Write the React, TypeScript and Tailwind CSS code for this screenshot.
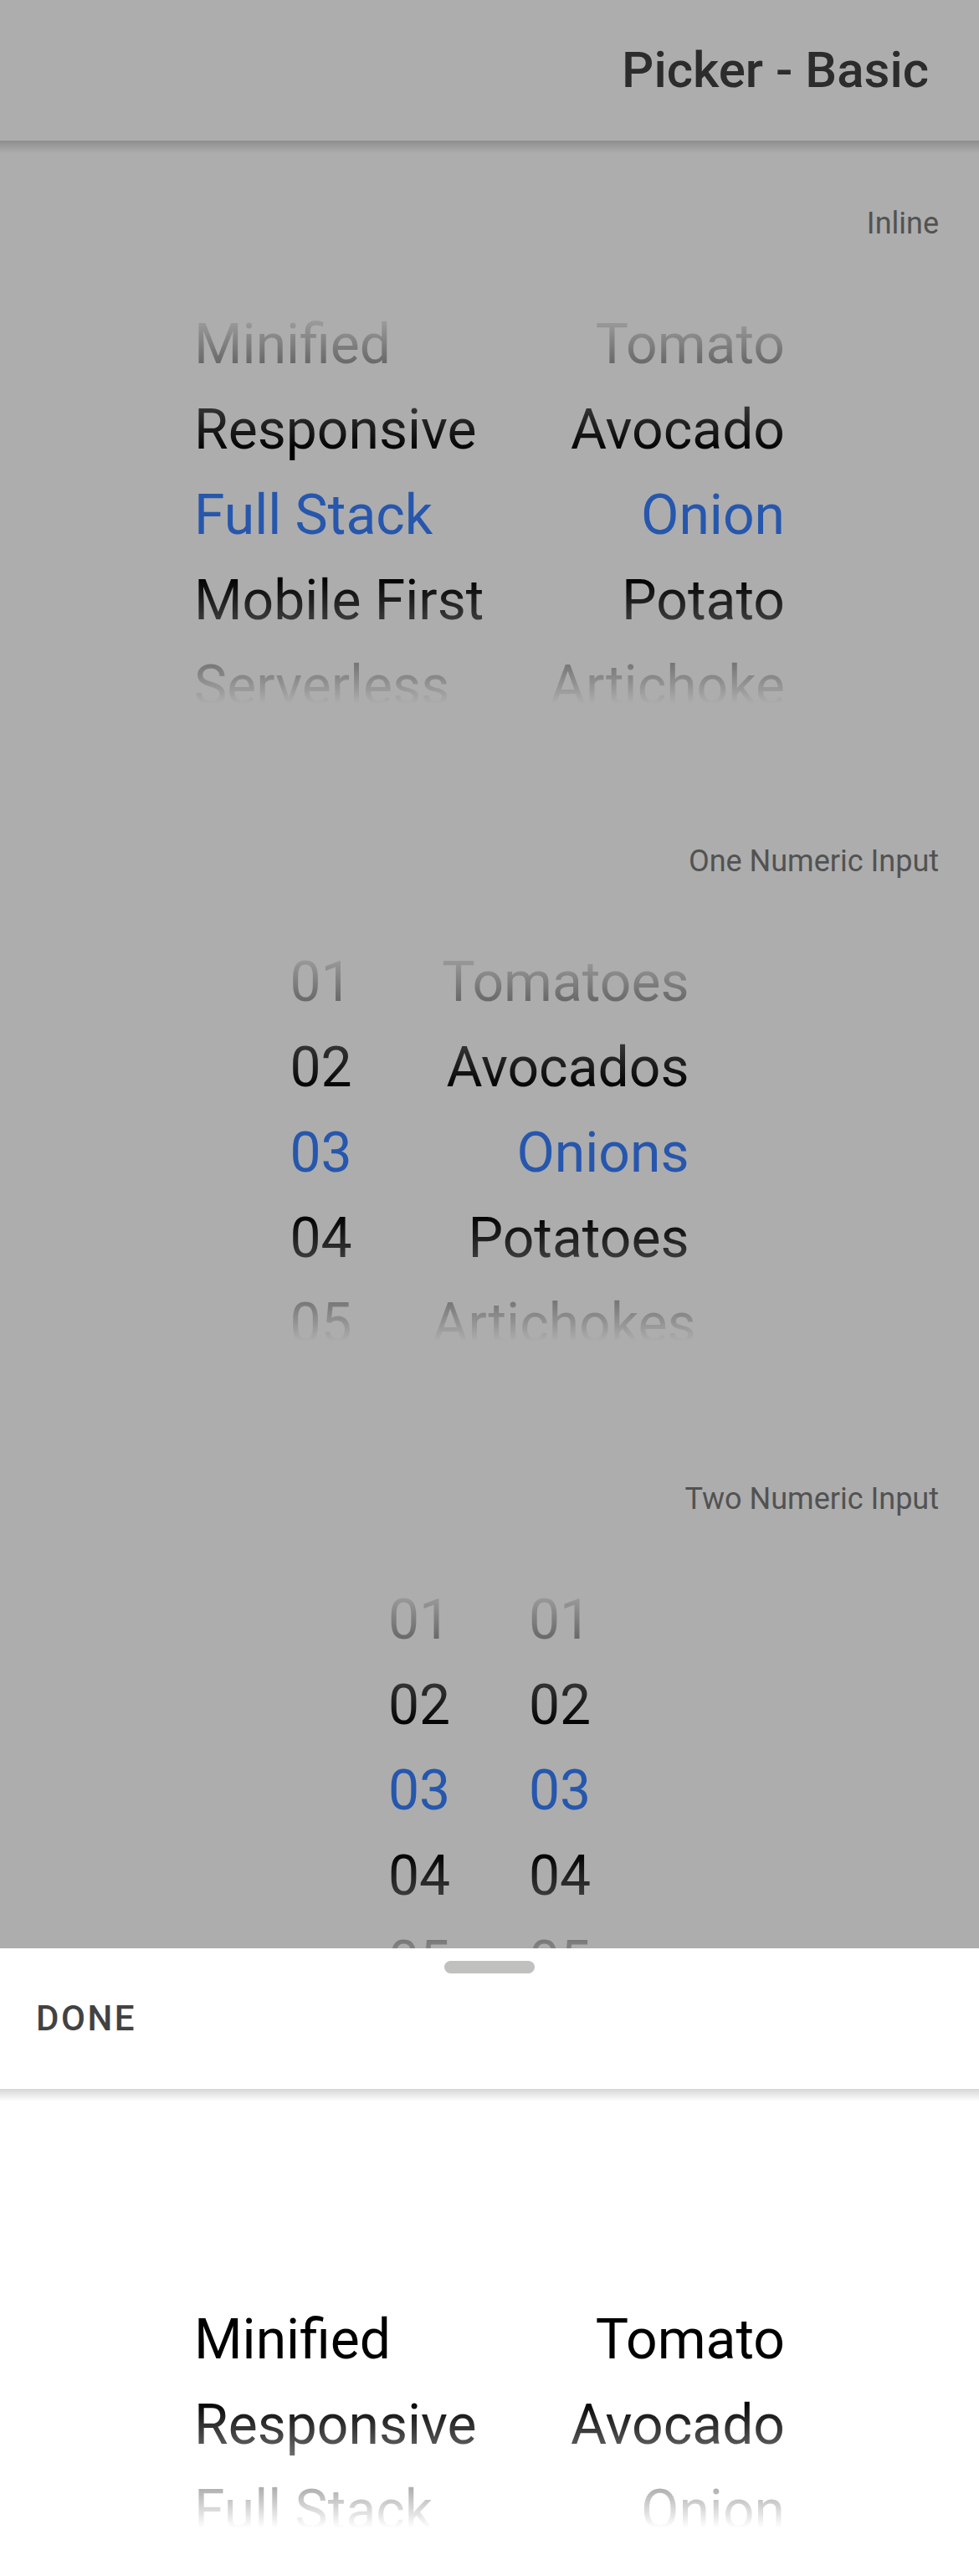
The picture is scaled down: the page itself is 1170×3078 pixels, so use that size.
import React from 'react';

interface PickerColumnProps {
  items: string[];
  selected: number;
  width: string;
  align: 'left' | 'right';
  highlight?: boolean;
}

interface PickerProps {
  columns: PickerColumnProps[];
  gap: string;
}

// one wheel column, the selected row sits at the middle of the 600px window
const PickerColumn: React.FC<PickerColumnProps> = ({ items, selected, width, align, highlight = true }) => {
  // the column scrolls so the selected row is centered: first row starts at 45px when index 2 is picked
  const offset = 45 + (2 - selected) * 102;
  return (
    <div className={`${width} ${align === 'left' ? 'text-left' : 'text-right'} flex flex-col`} style={{ paddingTop: offset }}>
      {items.map((item, i) => (
        <div
          key={item}
          className={`h-[102px] leading-[102px] text-[66px] whitespace-nowrap ${
            i === selected && highlight ? 'text-[#3880ff]' : 'text-black'
          }`}
        >
          {item}
        </div>
      ))}
    </div>
  );
};

const Picker: React.FC<PickerProps & { highlight?: boolean }> = ({ columns, gap, highlight = true }) => {
  return (
    <div className="relative h-[600px] overflow-hidden">
      <div className={`flex justify-center ${gap}`}>
        {columns.map((col, i) => (
          <PickerColumn key={i} {...col} highlight={highlight} />
        ))}
      </div>
      {/* fades above and below the selected row */}
      <div className="pointer-events-none absolute inset-x-0 top-0 h-[249px] bg-[linear-gradient(to_bottom,#ffffff_20%,rgba(255,255,255,0)_90%)]" />
      <div className="pointer-events-none absolute inset-x-0 top-[348px] h-[252px] bg-[linear-gradient(to_top,#ffffff_30%,rgba(255,255,255,0)_90%)]" />
    </div>
  );
};

const frameworks = ['Minified', 'Responsive', 'Full Stack', 'Mobile First', 'Serverless'];
const vegetables = ['Tomato', 'Avocado', 'Onion', 'Potato', 'Artichoke'];
const vegetablesPlural = ['Tomatoes', 'Avocados', 'Onions', 'Potatoes', 'Artichokes'];
const numbers = ['01', '02', '03', '04', '05'];

const Section: React.FC<{ label: string; children: React.ReactNode }> = ({ label, children }) => (
  <div className="h-[762px]">
    <div className="h-[54px] leading-[54px] text-[36px] text-right pr-[48px] text-[#7a7a7a]">{label}</div>
    <div className="mt-[22px]">{children}</div>
  </div>
);

const App: React.FC = () => {
  return (
    <div className="relative w-full h-[3078px] overflow-hidden bg-white [font-family:Roboto,'Liberation_Sans',sans-serif]">
      {/* page */}
      <div className="relative z-10 flex h-[168px] items-center justify-end bg-white pr-[60px]">
        <h1 className="text-[60px] leading-none font-medium text-[#424242]">Picker - Basic</h1>
        <div className="absolute inset-x-0 top-full h-[15px] bg-[linear-gradient(to_bottom,rgba(0,0,0,0.18),rgba(0,0,0,0))]" />
      </div>

      <div className="pt-[72px]">
        <Section label="Inline">
          <Picker
            gap="gap-0"
            columns={[
              { items: frameworks, selected: 2, width: 'w-[352px]', align: 'left' },
              { items: vegetables, selected: 2, width: 'w-[354px]', align: 'right' },
            ]}
          />
        </Section>
        <Section label="One Numeric Input">
          <Picker
            gap="gap-0"
            columns={[
              { items: numbers, selected: 2, width: 'w-[170px]', align: 'left' },
              { items: vegetablesPlural, selected: 2, width: 'w-[307px]', align: 'right' },
            ]}
          />
        </Section>
        <Section label="Two Numeric Input">
          <Picker
            gap="gap-[94px]"
            columns={[
              { items: numbers, selected: 2, width: 'w-[74px]', align: 'left' },
              { items: numbers, selected: 2, width: 'w-[74px]', align: 'left' },
            ]}
          />
        </Section>
      </div>

      {/* backdrop */}
      <div className="absolute inset-0 z-20 bg-black/[0.32]" />

      {/* bottom sheet picker */}
      <div className="absolute inset-x-0 bottom-0 z-30 h-[750px] bg-white">
        <div className="relative z-10 flex h-[168px] items-center bg-white pl-[43px]">
          <div className="absolute left-1/2 top-[15px] h-[15px] w-[108px] -translate-x-1/2 rounded-full bg-[#c0c0be]" />
          <button className="text-[42px] leading-none font-medium uppercase tracking-[0.06em] text-[#424242]">Done</button>
          <div className="absolute inset-x-0 top-full h-[15px] bg-[linear-gradient(to_bottom,rgba(0,0,0,0.16),rgba(0,0,0,0))]" />
        </div>
        <Picker
          gap="gap-0"
          highlight={false}
          columns={[
            { items: frameworks, selected: 0, width: 'w-[352px]', align: 'left' },
            { items: vegetables, selected: 0, width: 'w-[354px]', align: 'right' },
          ]}
        />
      </div>
    </div>
  );
};

export default App;
